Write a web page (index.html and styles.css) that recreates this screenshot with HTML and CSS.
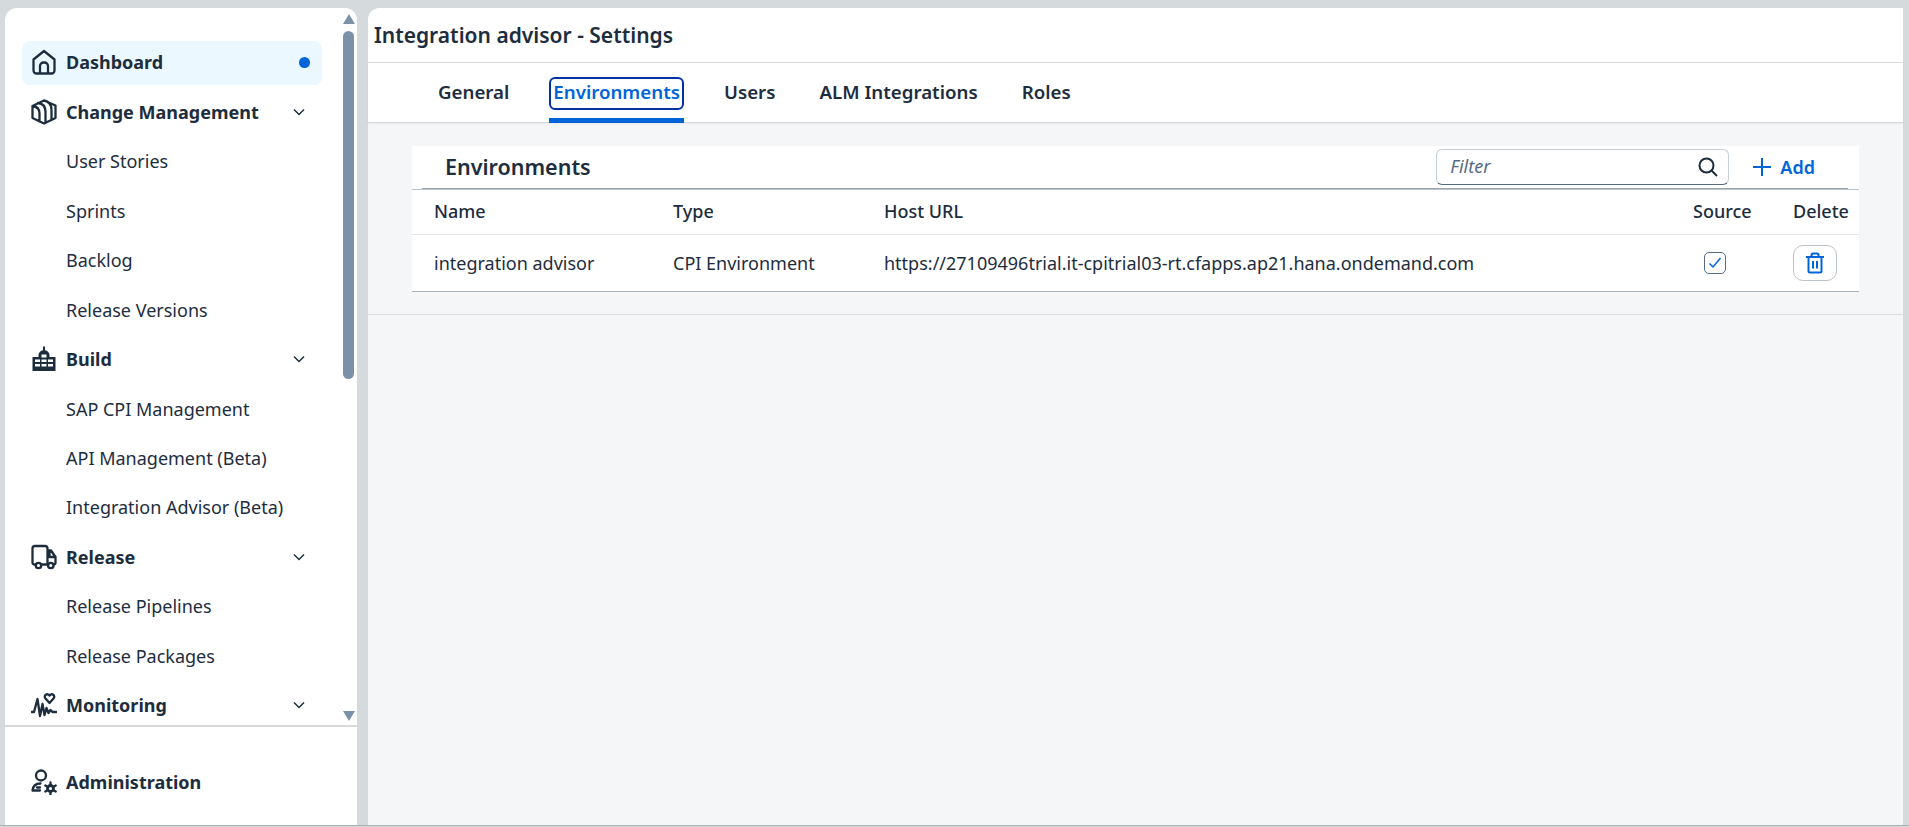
FILE: index.html
```html
<!DOCTYPE html>
<html lang="en">
  <head>
    <meta charset="UTF-8" />
    <title>Integration advisor - Settings</title>
    <link rel="stylesheet" href="styles.css">
  </head>
  <body>
    <div class="app">
      <aside class="sidebar">
        <div class="nav-scroll">
          <nav class="nav-list">
            <a class="nav-row nav-group selected">
              <svg class="nav-icon" viewBox="0 0 26 26"><path d="M2.500 10.500 13 2l10.500 8.500V21.500a3 3 0 0 1-3 3h-15a3 3 0 0 1-3-3ZM9 24.500V17a3.500 3.500 0 0 1 3.500-3.500h1A3.500 3.500 0 0 1 17 17v7.500"/></svg>
              <span class="nav-label">Dashboard</span>
              <span class="dot"></span>
            </a>
            <a class="nav-row nav-group">
              <svg class="nav-icon" viewBox="0 0 26 26"><path d="M13 1.500 24.500 6.500V19L13 24.500 1.500 19V7ZM1.500 7C6 7.500 8.500 10 8.500 14.500V22.500M7 4C12 4.500 14.500 8 14.500 13V23.500M13 1.500C18 2.500 20.500 6 20.500 11V21"/></svg>
              <span class="nav-label">Change Management</span>
              <svg class="chevron" viewBox="0 0 12 8"><path d="M1 1.500 6 6.500l5-5"/></svg>
            </a>
            <a class="nav-row">User Stories</a>
            <a class="nav-row">Sprints</a>
            <a class="nav-row">Backlog</a>
            <a class="nav-row">Release Versions</a>
            <a class="nav-row nav-group">
              <svg class="nav-icon" viewBox="0 0 26 26"><path class="solid" d="M12 .5h2v3.700c2.500.5 4 2.300 4.500 4.300v2.500h6V25h-23V11h6V8.500c.5-2 2-3.800 4.500-4.300Z"/><path class="window" d="M4 13.500h5v2.500H4ZM10.500 13.500h5v2.500h-5ZM17 13.500h5v2.500h-5ZM4 18h5v2.500H4ZM10.500 18h5v2.500h-5ZM17 18h5v2.500h-5ZM10.500 8.500h5v3h-5Z"/></svg>
              <span class="nav-label">Build</span>
              <svg class="chevron" viewBox="0 0 12 8"><path d="M1 1.500 6 6.500l5-5"/></svg>
            </a>
            <a class="nav-row">SAP CPI Management</a>
            <a class="nav-row">API Management (Beta)</a>
            <a class="nav-row">Integration Advisor (Beta)</a>
            <a class="nav-row nav-group">
              <svg class="nav-icon" viewBox="0 0 26 26"><path d="M4.500 20.500H3.500a2 2 0 0 1-2-2V4.500A2.500 2.500 0 0 1 4 2h10a2.500 2.500 0 0 1 2.500 2.500v16H10.500M16.500 6.500H20l4.500 6.500v5.500a2 2 0 0 1-2 2H22.500M16.500 20.500H17M18.500 7v6h6"/><circle cx="7.500" cy="21.500" r="2.700"/><circle cx="19.800" cy="21.500" r="2.700"/></svg>
              <span class="nav-label">Release</span>
              <svg class="chevron" viewBox="0 0 12 8"><path d="M1 1.500 6 6.500l5-5"/></svg>
            </a>
            <a class="nav-row">Release Pipelines</a>
            <a class="nav-row">Release Packages</a>
            <a class="nav-row nav-group">
              <svg class="nav-icon" viewBox="0 0 26 26"><path d="M.5 20H3L6.500 7 9 24l2.500-12 2 11 2-7 2 5 2-3 2 2H25.500M18.500 11 14.500 6.500C12 3.500 16.500.5 18.500 3.500 20.500.5 25 3.500 22.500 6.500Z"/></svg>
              <span class="nav-label">Monitoring</span>
              <svg class="chevron" viewBox="0 0 12 8"><path d="M1 1.500 6 6.500l5-5"/></svg>
            </a>
          </nav>
          <div class="scrollbar">
            <span class="arrow-up"></span>
            <div class="scroll-thumb"></div>
            <span class="arrow-down"></span>
          </div>
        </div>
        <div class="nav-footer">
          <a class="nav-row nav-group">
            <svg class="nav-icon" viewBox="0 0 26 26"><circle cx="10" cy="6.500" r="5"/><path d="M9.500 14.500C5 14.500 2 17 1.500 21.500H9M6 18.500h3"/><circle cx="19.500" cy="19.500" r="3" stroke-width="2.800"/><path d="M19.500 13.500v2.500M19.500 23v2.500M14.300 16.500l2.200 1.300M22.500 21.200l2.200 1.300M14.300 22.500l2.200-1.300M22.500 17.800l2.200-1.300"/></svg>
            <span class="nav-label">Administration</span>
          </a>
        </div>
      </aside>

      <main class="main">
        <header class="page-title">Integration advisor - Settings</header>
        <div class="tabs">
          <a class="tab">General</a>
          <a class="tab active"><span class="tab-focus">Environments</span></a>
          <a class="tab">Users</a>
          <a class="tab">ALM Integrations</a>
          <a class="tab">Roles</a>
        </div>
        <section class="content">
          <div class="card">
            <div class="toolbar">
              <h2>Environments</h2>
              <div class="filter">
                <span class="filter-text">Filter</span>
                <svg class="search-icon" viewBox="0 0 20 20"><circle cx="8.500" cy="8.500" r="7"/><path d="m13.500 13.500 5.500 5.500"/></svg>
              </div>
              <a class="add-btn">
                <svg viewBox="0 0 20 20"><path d="M10 1v18M1 10h18"/></svg>
                Add
              </a>
            </div>
            <table>
              <thead>
                <tr>
                  <th class="col-name">Name</th>
                  <th class="col-type">Type</th>
                  <th>Host URL</th>
                  <th class="col-source">Source</th>
                  <th class="col-delete">Delete</th>
                </tr>
              </thead>
              <tbody>
                <tr>
                  <td class="cell-text">integration advisor</td>
                  <td class="cell-text">CPI Environment</td>
                  <td class="cell-text">https://27109496trial.it-cpitrial03-rt.cfapps.ap21.hana.ondemand.com</td>
                  <td>
                    <span class="checkbox">
                      <svg viewBox="0 0 14 14"><path d="m1.500 7.500 3.500 3.500 7.500-9"/></svg>
                    </span>
                  </td>
                  <td>
                    <button class="delete-btn">
                      <svg viewBox="0 0 20 22"><path d="M1 5h18M6.500 5V3a1.500 1.500 0 0 1 1.500-1.500h4A1.500 1.500 0 0 1 13.500 3v2M3.500 5v14a1.500 1.500 0 0 0 1.500 1.500h10a1.500 1.500 0 0 0 1.500-1.500V5M8 9v7.500M12 9v7.500"/></svg>
                    </button>
                  </td>
                </tr>
              </tbody>
            </table>
          </div>
        </section>
      </main>
    </div>
  </body>
</html>
```

FILE: styles.css
```css
* {
  box-sizing: border-box;
}
html,
body {
  height: 100%;
}
body {
  margin: 0;
  overflow: hidden;
  background-color: #d5dadd;
  color: #1d2d3e;
  font-family: "Noto Sans", Arial, sans-serif;
  font-size: 18px;
}
.app {
  display: flex;
  gap: 11px;
  height: 826px;
  padding: 8px 6px 0 5px;
  border-bottom: 1px solid #a9b0b6;
}

/* sidebar */
.sidebar {
  display: flex;
  flex-direction: column;
  width: 352px;
  flex-shrink: 0;
  background-color: #fff;
  border-radius: 12px 12px 0 0;
}
.nav-scroll {
  display: flex;
  height: 719px;
  overflow: hidden;
  border-bottom: 2px solid #d9d9d9;
}
.nav-list {
  display: flex;
  flex-direction: column;
  gap: 5.45px;
  width: 300px;
  height: 760px;
  margin-left: 17px;
  padding-top: 33px;
}
.nav-row {
  display: flex;
  align-items: center;
  flex-shrink: 0;
  height: 44px;
  padding-left: 44px;
  padding-bottom: 1px;
  border-radius: 8px;
}
.nav-group {
  padding-left: 9px;
  font-weight: 700;
}
.nav-row.selected {
  padding-bottom: 2px;
  background-color: #ebf8ff;
}
.nav-icon {
  width: 26px;
  height: 26px;
  margin-right: 9px;
  flex-shrink: 0;
  fill: none;
  stroke: #1d2d3e;
  stroke-width: 2.300;
  stroke-linejoin: round;
  stroke-linecap: round;
}
.nav-icon .solid {
  fill: #1d2d3e;
  stroke: none;
}
.nav-icon .window {
  fill: #fff;
  stroke: none;
}
.nav-label {
  flex: 1;
}
.dot {
  width: 11px;
  height: 11px;
  margin-right: 12px;
  border-radius: 50%;
  background-color: #0064d9;
}
.chevron {
  width: 12px;
  height: 8px;
  margin-right: 17px;
  fill: none;
  stroke: #1d2d3e;
  stroke-width: 1.500;
}
.scrollbar {
  display: flex;
  flex-direction: column;
  align-items: center;
  width: 13px;
  margin-left: 20px;
  padding-top: 6px;
}
.arrow-up,
.arrow-down {
  width: 0;
  height: 0;
  border-left: 6.500px solid transparent;
  border-right: 6.500px solid transparent;
}
.arrow-up {
  border-bottom: 10px solid #7b91a8;
}
.arrow-down {
  margin-top: 332px;
  border-top: 10px solid #7b91a8;
}
.scroll-thumb {
  width: 11px;
  height: 348px;
  margin-top: 7px;
  border-radius: 6px;
  background-color: #7b91a8;
}
.nav-footer {
  padding: 33px 0 0 17px;
}

/* main area */
.main {
  display: flex;
  flex-direction: column;
  flex: 1;
  min-width: 0;
  background-color: #f5f6f7;
  border-radius: 12px 0 0 0;
}
.page-title {
  display: flex;
  align-items: center;
  height: 55px;
  padding-left: 6px;
  background-color: #fff;
  border-bottom: 1px solid #d9d9d9;
  border-radius: 12px 0 0 0;
  font-size: 21px;
  font-weight: 600;
}
.tabs {
  display: flex;
  gap: 44px;
  height: 60px;
  padding-left: 70px;
  background-color: #fff;
  border-bottom: 1px solid #d9d9d9;
  box-shadow: 0 1px 2px rgba(0, 0, 0, 0.06);
  font-size: 18.700px;
  font-weight: 600;
}
.tab {
  display: flex;
  align-items: center;
  height: 59px;
  padding-bottom: 2px;
}
.tab.active {
  height: 60px;
  margin: 0 -4px;
  padding: 5px 0 0;
  color: #0064d9;
  border-bottom: 5px solid #0064d9;
  border-radius: 3px 3px 0 0;
}
.tab-focus {
  display: block;
  height: 33px;
  padding: 0 2px;
  border: 2px solid #0032a5;
  border-radius: 6px;
  line-height: 26px;
}
.content {
  height: 192px;
  padding: 23px 44px 0;
  border-bottom: 1px solid #d9dcdf;
}
.card {
  background-color: #fff;
}
.toolbar {
  display: flex;
  align-items: center;
  height: 43px;
  margin: 0 11px 0 10px;
  padding-left: 23px;
  border-bottom: 1px solid #9aa4ad;
}
.toolbar h2 {
  flex: 1;
  margin: 0;
  padding-bottom: 2px;
  font-size: 21.500px;
  font-weight: 600;
}
.filter {
  display: flex;
  align-items: center;
  justify-content: space-between;
  width: 293px;
  height: 36px;
  padding: 0 10px 2px 13px;
  border: 1px solid #c6ced6;
  border-bottom-color: #556b82;
  border-radius: 6px;
}
.filter-text {
  color: #556b82;
  font-style: italic;
}
.search-icon {
  width: 20px;
  height: 20px;
  margin-top: 2px;
  fill: none;
  stroke: #1d2d3e;
  stroke-width: 2;
}
.add-btn {
  display: flex;
  align-items: center;
  gap: 8px;
  margin: 0 33px 0 23px;
  padding-bottom: 1px;
  color: #0064d9;
  font-weight: 600;
}
.add-btn svg {
  width: 20px;
  height: 20px;
  fill: none;
  stroke: #0064d9;
  stroke-width: 2;
}
table {
  width: 100%;
  border-collapse: collapse;
  table-layout: fixed;
  border-top: 1px solid #bcc3ca;
  border-bottom: 1px solid #a9b0b6;
}
th,
td {
  padding: 0 0 0 22px;
  text-align: left;
}
th {
  height: 45px;
  padding-bottom: 2px;
  font-weight: 500;
  border-bottom: 1px solid #e5e5e5;
}
td {
  height: 57px;
}
td.cell-text {
  padding-bottom: 1px;
}
.col-name {
  width: 239px;
}
.col-type {
  width: 211px;
}
.col-source {
  width: 100px;
}
.col-delete {
  width: 88px;
}
.checkbox {
  display: flex;
  align-items: center;
  justify-content: center;
  width: 22px;
  height: 22px;
  margin-left: 11px;
  border: 1px solid #556b82;
  border-radius: 5px;
}
.checkbox svg {
  width: 14px;
  height: 14px;
  fill: none;
  stroke: #0064d9;
  stroke-width: 1.500;
}
.delete-btn {
  display: flex;
  align-items: center;
  justify-content: center;
  width: 44px;
  height: 36px;
  padding: 0;
  background-color: #fff;
  border: 1px solid #bcc3ca;
  border-radius: 10px;
}
.delete-btn svg {
  width: 20px;
  height: 22px;
  fill: none;
  stroke: #0064d9;
  stroke-width: 2;
}
```
